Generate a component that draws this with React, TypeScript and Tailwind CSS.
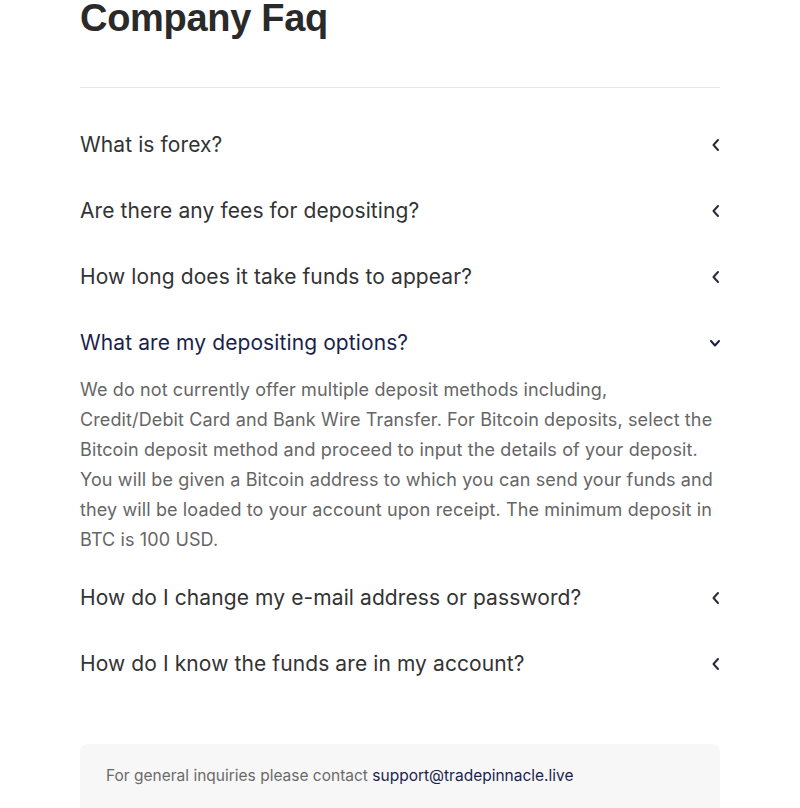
import { useState } from "react";

type Faq = { q: string; a?: string[] };

const faqs: Faq[] = [
    { q: "What is forex?" },
    { q: "Are there any fees for depositing?" },
    { q: "How long does it take funds to appear?" },
    {
        q: "What are my depositing options?",
        a: [
            "We do not currently offer multiple deposit methods including,",
            "Credit/Debit Card and Bank Wire Transfer. For Bitcoin deposits, select the",
            "Bitcoin deposit method and proceed to input the details of your deposit.",
            "You will be given a Bitcoin address to which you can send your funds and",
            "they will be loaded to your account upon receipt. The minimum deposit in",
            "BTC is 100 USD.",
        ],
    },
    { q: "How do I change my e-mail address or password?" },
    { q: "How do I know the funds are in my account?" },
];

const Chevron = ({ open }: { open: boolean }) => (
    <svg width="14" height="14" viewBox="0 0 14 14" fill="none"
        className={open ? "text-[#1b1f4d]" : "text-[#2b2b3b]"}>
        {open ? (
            <path d="M5 5l4 4.5L13 5" stroke="currentColor" strokeWidth="2" strokeLinecap="round" strokeLinejoin="round" />
        ) : (
            <path d="M12 2L7.5 7l4.5 5" stroke="currentColor" strokeWidth="2" strokeLinecap="round" strokeLinejoin="round" />
        )}
    </svg>
);

export default function App() {
    const [open, setOpen] = useState(3);

    return (
        <div className="bg-white min-h-[808px] font-['Inter',sans-serif]">
            <div className="w-[640px] mx-auto">
                <h1 className="font-['Liberation_Sans',sans-serif] font-bold text-[38px] leading-none text-[#2a2a2a] h-[44px] -mt-[1px] tracking-[-0.3px]">
                    Company Faq
                </h1>
                <div className="mt-[44px] border-t border-[#e6e6e6]" />
                <div className="mt-6">
                    {faqs.map((f, i) => (
                        <div key={i}>
                            <button
                                onClick={() => setOpen(open === i ? -1 : i)}
                                className="w-full h-[66px] flex items-center justify-between text-left"
                            >
                                <span className={`text-[21px] tracking-[0.1px] ${open === i ? "text-[#1b1f4d]" : "text-[#333]"}`}>
                                    {f.q}
                                </span>
                                <Chevron open={open === i} />
                            </button>
                            {open === i && f.a && (
                                <p className="text-[18px] leading-[30px] tracking-[0.12px] text-[#666] pb-[10px] -mt-px whitespace-nowrap">
                                    {f.a.map((line, j) => (
                                        <span key={j} className="block">{line}</span>
                                    ))}
                                </p>
                            )}
                        </div>
                    ))}
                </div>
                <div className="mt-[47px] bg-[#f7f7f7] rounded-lg px-[26px] pt-[20px] pb-[30px] text-[15.5px] text-[#6a6a6a]">
                    For general inquiries please contact <span className="text-[#1b1f4d]">support@tradepinnacle.live</span>
                </div>
            </div>
        </div>
    );
}
